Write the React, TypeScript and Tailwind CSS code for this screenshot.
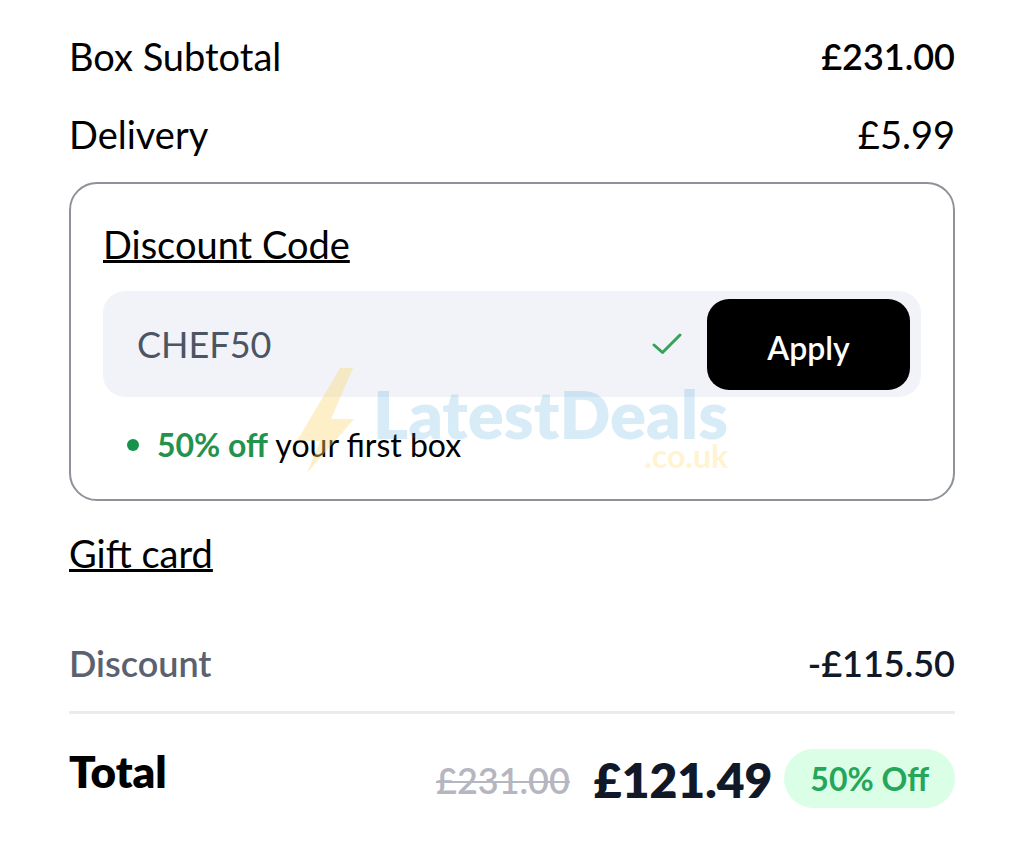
import { useState } from 'react';

function Watermark() {
  return (
    <div
      aria-hidden="true"
      className="pointer-events-none absolute top-[184px] left-[226px] flex items-start"
    >
      <svg width="58" height="108" viewBox="0 0 58 108" fill="#F9D978" fillOpacity="0.4">
        <path d="M43 0H56L34 51H57L10 105L23 73H0Z" />
      </svg>
      <div className="ml-[18px] flex flex-col items-end">
        <span className="pt-[10px] text-[67px] leading-[70px] font-extrabold text-[#3E9FD6]/20">LatestDeals</span>
        <span className="text-[32px] leading-4 font-bold text-[#FFD23F]/25">.co.uk</span>
      </div>
    </div>
  );
}

function DiscountCard() {
  const [code, setCode] = useState('CHEF50');

  return (
    <section className="relative rounded-[28px] border-2 border-[#8E9399] px-8 pt-9 pb-[34px]">
      <label htmlFor="discount-code" className="block text-[38px] leading-[48px] underline decoration-[3px] underline-offset-1">
        Discount Code
      </label>
      <div className="mt-[23px] flex h-[106px] items-center rounded-[22px] bg-[#F2F3F8] pr-[11px] pl-[34px]">
        <input
          id="discount-code"
          value={code}
          onChange={(event) => setCode(event.target.value)}
          className="min-w-0 flex-1 bg-transparent text-[36px] text-[#4B5563] outline-none"
        />
        <svg width="30" height="22" viewBox="0 0 30 22" fill="none" stroke="#35A257" strokeWidth="3" strokeLinecap="round" strokeLinejoin="round">
          <path d="M2 12L10.500 19.500L28 2" />
        </svg>
        <button type="button" className="ml-[25px] h-[91px] w-[203px] rounded-[22px] bg-black pt-2 text-[32px] font-semibold text-white">
          Apply
        </button>
      </div>
      <ul className="mt-7 pl-6 text-[32px] leading-10">
        <li className="flex items-center">
          <span className="mr-[18px] size-3 rounded-full bg-[#17924A]" />
          <span>
            <strong className="font-bold text-[#23924D]">50% off</strong> your first box
          </span>
        </li>
      </ul>
      <Watermark />
    </section>
  );
}

export default function App() {
  return (
    <main className="bg-white px-[69px] pt-8 pb-9 font-['Lato',sans-serif] text-black">
      <dl className="text-[38px] leading-[48px]">
        <div className="flex justify-between">
          <dt>Box Subtotal</dt>
          <dd className="text-[36px] font-semibold">£231.00</dd>
        </div>
        <div className="mt-[30px] flex justify-between">
          <dt>Delivery</dt>
          <dd>£5.99</dd>
        </div>
      </dl>

      <div className="mt-6">
        <DiscountCard />
      </div>

      <a href="#gift-card" className="mt-7 inline-block text-[38px] leading-[48px] underline decoration-[3px] underline-offset-1">
        Gift card
      </a>

      <div className="mt-[62px] flex justify-between border-b-3 border-[#EBEBED] pb-6 text-[36px] leading-[48px] font-semibold">
        <span className="text-[#5B616E]">Discount</span>
        <span className="text-[#111827]">-£115.50</span>
      </div>

      <div className="mt-8 flex items-start justify-between">
        <span className="text-[44px] leading-[50px] font-extrabold">Total</span>
        <div className="flex items-center">
          <del className="pt-1 text-[36px] font-semibold text-[#B5B6C0] decoration-2">£231.00</del>
          <strong className="ml-6 pt-1 text-[48px] leading-[60px] font-extrabold text-[#111827]">£121.49</strong>
          <span className="ml-3 rounded-full bg-[#DBFEE7] px-[26px] py-[9px] text-[32px] leading-[41px] font-bold text-[#25A65A]">
            50% Off
          </span>
        </div>
      </div>
    </main>
  );
}
